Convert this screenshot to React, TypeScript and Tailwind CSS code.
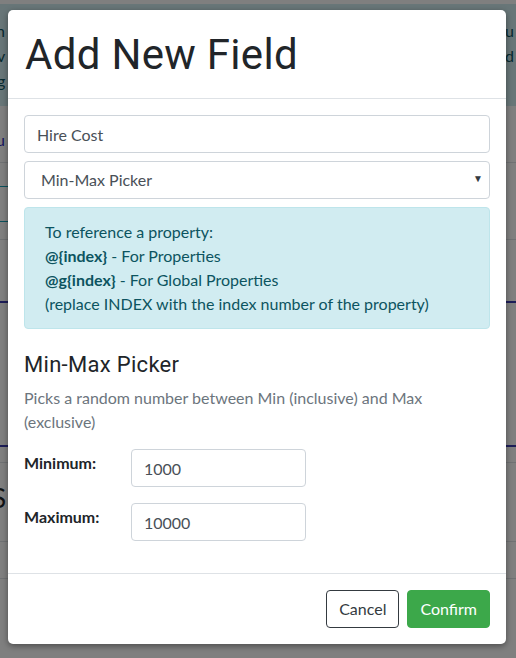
import React from 'react';

const bodyFont = { fontFamily: 'Lato, "Liberation Sans", sans-serif' };
const headFont = { fontFamily: 'Roboto, "Liberation Sans", sans-serif' };

const BackgroundPage: React.FC = () => (
    <div className="absolute inset-0 bg-white text-[#212529]" style={bodyFont}>
        <div className="h-[4px]" />
        {/* info alert behind the modal */}
        <div className="h-[102px] bg-[#d1ecf1] text-[#0c5460] text-[16px] leading-[25px] pt-[14px]">
            <div className="flex justify-between -ml-[4px] pr-[2px]"><span>n</span><span>u</span></div>
            <div className="flex justify-between -ml-[3px] pr-[2px]"><span>v</span><span>d</span></div>
            <div className="flex justify-between -ml-[3px]"><span>g</span><span /></div>
        </div>
        <div className="h-[57px] border-b border-[#dee2e6] pt-[22px] -ml-[4px] text-[#2c2cc0]">u</div>
        <div className="h-[24px] border-b border-[#17a2b8] mr-[14px]" />
        <div className="h-[35px] border-b border-[#17a2b8] mr-[14px]" />
        <div className="h-[18px] border-b border-[#dee2e6]" />
        <div className="h-[63px] border-b-2 border-[#3a3ab0]" />
        <div className="h-[144px] border-b-2 border-[#3a3ab0]" />
        <div className="h-[16px] border-b border-[#dee2e6]" />
        <div className="h-[79px] border-b border-[#dee2e6] pt-[20px] -ml-[8px] text-[26px] leading-[30px]">S</div>
        <div className="h-[37px] border-b border-[#dee2e6]" />
    </div>
);

const App: React.FC = () => {
    return (
        <div className="relative w-[516px] h-[658px] overflow-hidden">
            <BackgroundPage />
            <div className="absolute inset-0 bg-black/50" />

            <div
                className="absolute left-[8px] top-[10px] w-[498px] bg-white rounded-[5px] shadow-[0_2px_6px_rgba(0,0,0,0.4)] text-[#212529]"
                style={bodyFont}
            >
                <div className="border-b border-[#dee2e6] px-4 pt-[20px] pb-[18px]">
                    <h1 className="text-[42px] leading-[50px] font-normal text-[#212529] ml-[1px] tracking-[0.3px]" style={headFont}>
                        Add New Field
                    </h1>
                </div>

                <div className="p-4">
                    <input
                        className="block w-full h-[38px] border border-[#ced4da] rounded-[4px] px-3 text-[16px] text-[#495057] outline-none"
                        defaultValue="Hire Cost"
                    />
                    <div className="relative mt-2 h-[38px] border border-[#ced4da] rounded-[4px] flex items-center pl-4 pr-3 text-[16px] text-[#495057]">
                        <span>Min-Max Picker</span>
                        <span className="absolute right-[6px] top-[9px] text-[10px] text-[#343a40]">▼</span>
                    </div>

                    <div className="mt-2 border border-[#bee5eb] bg-[#d1ecf1] text-[#0c5460] rounded-[4px] px-5 py-3 text-[16px] leading-6">
                        <div>To reference a property:</div>
                        <div><b>@{'{index}'}</b> - For Properties</div>
                        <div><b>@g{'{index}'}</b> - For Global Properties</div>
                        <div>(replace INDEX with the index number of the property)</div>
                    </div>

                    <h5 className="mt-[23px] text-[22px] leading-[26px] font-normal text-[#212529] tracking-[0.3px]" style={headFont}>
                        Min-Max Picker
                    </h5>
                    <p className="mt-2 text-[16px] leading-6 text-[#6c757d]">
                        Picks a random number between Min (inclusive) and Max (exclusive)
                    </p>

                    <div className="mt-[15px] flex flex-col gap-4 mb-4">
                        <div className="flex items-start">
                            <label className="w-[107px] pt-[2px] font-bold text-[16px] leading-6">Minimum:</label>
                            <input
                                className="w-[175px] h-[38px] border border-[#ced4da] rounded-[4px] px-3 text-[16px] text-[#495057] outline-none"
                                defaultValue="1000"
                            />
                        </div>
                        <div className="flex items-start">
                            <label className="w-[107px] pt-[2px] font-bold text-[16px] leading-6">Maximum:</label>
                            <input
                                className="w-[175px] h-[38px] border border-[#ced4da] rounded-[4px] px-3 text-[16px] text-[#495057] outline-none"
                                defaultValue="10000"
                            />
                        </div>
                    </div>
                </div>

                <div className="border-t border-[#dee2e6] p-4 flex justify-end gap-2">
                    <button className="h-[38px] px-3 rounded-[4px] border border-[#343a40] bg-white text-[16px] text-[#343a40]">
                        Cancel
                    </button>
                    <button className="h-[38px] px-3 rounded-[4px] border border-[#3ca84a] bg-[#3ca84a] text-[16px] text-white">
                        Confirm
                    </button>
                </div>
            </div>
        </div>
    );
};

export default App;
